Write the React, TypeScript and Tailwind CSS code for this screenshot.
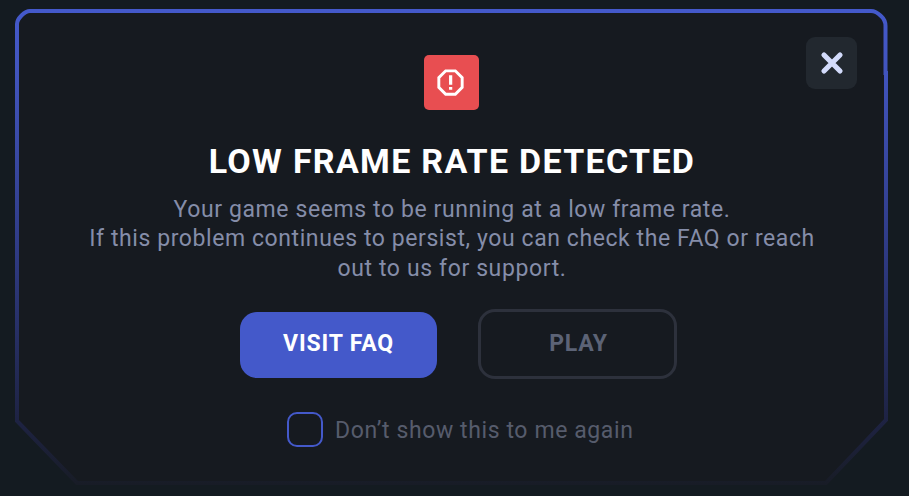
import React from "react";

function Frame() {
  return (
    <svg className="absolute inset-0" width="909" height="496" viewBox="0 0 909 496" fill="none">
      <defs>
        <linearGradient id="edge" gradientUnits="userSpaceOnUse" x1="0" y1="9" x2="0" y2="485">
          <stop offset="0" stopColor="#4459cb" />
          <stop offset="0.12" stopColor="#4255bf" />
          <stop offset="0.5" stopColor="#2f3b86" />
          <stop offset="0.86" stopColor="#1e2344" />
          <stop offset="1" stopColor="#181c26" />
        </linearGradient>
      </defs>
      <path
        d="M30 11H871Q876 11 881 16Q885.5 20 885.5 26V73H886V420L826 483H77L17 421V24Q17 20 21.5 15.500Q26 11 30 11Z"
        fill="#161a20"
        stroke="url(#edge)"
        strokeWidth="4"
      />
    </svg>
  );
}

function ReportIcon() {
  return (
    <svg className="mr-px" width="35" height="35" viewBox="0 0 24 24" fill="#fff">
      <path d="M15.73 3H8.27L3 8.27v7.46L8.27 21h7.46L21 15.73V8.27L15.73 3zM19 14.9 14.9 19H9.1L5 14.9V9.1L9.1 5h5.8L19 9.1v5.8z" />
      <path d="M11 7h2.2v6.5H11zM11 15h2.2v2H11z" />
    </svg>
  );
}

export default function App() {
  return (
    <main className="relative h-[496px] w-[909px] overflow-hidden bg-[#141b21] font-[Roboto,sans-serif]">
      <Frame />
      <button className="absolute left-[806px] top-[37px] flex h-[52px] w-[51px] items-center justify-center rounded-[9px] bg-[#22282f]">
        <svg width="24" height="24" viewBox="0 0 24 24" stroke="#d3dbfb" strokeWidth="5.2" strokeLinecap="round">
          <path d="M4 4 20 20M20 4 4 20" />
        </svg>
      </button>
      <section className="relative flex h-full w-[902px] flex-col items-center pt-[55px]">
        <div className="flex h-[55px] w-[55px] shrink-0 items-center justify-center rounded-[5px] bg-[#e84e51]">
          <ReportIcon />
        </div>
        <h1 className="mt-[31px] h-[40px] whitespace-nowrap pl-[2px] text-[34px] font-bold leading-[40px] tracking-[1.3px] text-white">
          LOW FRAME RATE DETECTED
        </h1>
        <div className="mt-[14px] flex flex-col items-center whitespace-nowrap pl-[2px] text-[23px] leading-[29.3px] text-[#858da9]">
          <p className="tracking-[0.6px]">Your game seems to be running at a low frame rate.</p>
          <p className="tracking-[0.58px]">If this problem continues to persist, you can check the FAQ or reach</p>
          <p className="tracking-[0.62px]">out to us for support.</p>
        </div>
        <div className="mt-[26px] flex w-full shrink-0 items-center gap-[41px] pl-[240px]">
          <button className="mt-[2px] h-[66px] w-[197px] rounded-[17px] bg-[#4459ca] pb-px text-[23px] font-bold tracking-[0.85px] text-white">
            VISIT FAQ
          </button>
          <button className="h-[70px] w-[199px] rounded-[17px] border-[3.5px] border-[#2d313c] pl-[2px] text-[23px] font-bold tracking-[0.7px] text-[#5c6376]">
            PLAY
          </button>
        </div>
        <label className="mt-[31px] flex w-full items-center gap-[12px] whitespace-nowrap pl-[287px] text-[23px] text-[#565c6c]">
          <span className="h-[35px] w-[36px] shrink-0 rounded-[10px] border-2 border-[#4459ca]" />
          <span className="pt-[4px] tracking-[0.6px]">Don’t show this to me again</span>
        </label>
      </section>
    </main>
  );
}
